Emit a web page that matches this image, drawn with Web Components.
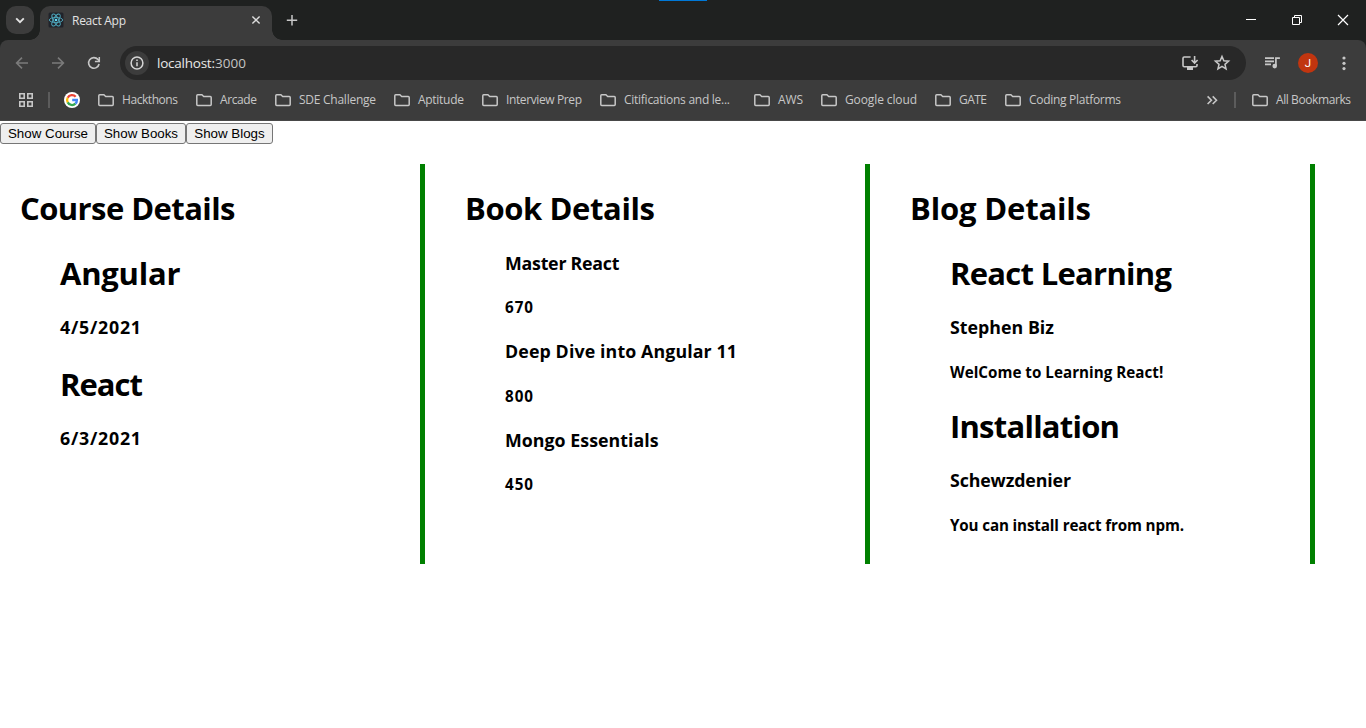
<!DOCTYPE html>
<html lang="en">
<head>
<meta charset="utf-8">
<title>React App</title>
<style>
html,body{margin:0;height:100%;background:#fff;overflow:hidden}
body{font-family:"Open Sans","Noto Sans",sans-serif;color:#000}
</style>
</head>
<body>
<browser-window></browser-window>
<script>
const define = (name, html, after) => customElements.define(name, class extends HTMLElement {
  connectedCallback() {
    if (this.shadowRoot) return;
    this.attachShadow({mode:'open'}).innerHTML = typeof html === 'function' ? html(this) : html;
    if (after) after(this);
  }
});

/* Single line of text whose tracking is tuned to fill the width in "w". */
define('fit-text', `<style>
:host{display:inline-block;white-space:nowrap}
span{display:inline-block}
</style><span><slot></slot></span>`, el => {
  const w = parseFloat(el.getAttribute('w'));
  const s = el.shadowRoot.querySelector('span');
  const n = el.textContent.length;
  el.style.width = w + 'px';
  s.style.letterSpacing = ((w - s.getBoundingClientRect().width) / (n - 1)).toFixed(4) + 'px';
});

const ICONS = {
  chevron:[16,'<path d="M4.2 6.3 8 10.1l3.8-3.8" fill="none" stroke="#e3e3e3" stroke-width="1.9"/>'],
  react:[16,'<rect x=".5" y=".5" width="15" height="15" rx="1.5" fill="#20232a"/><g fill="none" stroke="#4fa9be" stroke-width=".9"><ellipse cx="8" cy="8" rx="6.7" ry="2.6"/><ellipse cx="8" cy="8" rx="6.7" ry="2.6" transform="rotate(60 8 8)"/><ellipse cx="8" cy="8" rx="6.7" ry="2.6" transform="rotate(120 8 8)"/></g><circle cx="8" cy="8" r="1.3" fill="#61dafb"/>'],
  close:[16,'<path d="m4.4 4.4 7.2 7.2m0-7.2-7.2 7.2" stroke="#dcdcdc" stroke-width="1.4"/>'],
  plus:[16,'<path d="M8 3v10.4M2.8 8.2h10.4" stroke="#c7c7c7" stroke-width="1.5"/>'],
  min:[16,'<path d="M3 7.5h10" stroke="#fff"/>'],
  restore:[16,'<path d="M3.5 5.5h7v7h-7zM5.5 5.5v-2h7v7h-2" fill="none" stroke="#fff"/>'],
  winclose:[16,'<path d="m3 3 10 10M13 3 3 13" stroke="#fff" stroke-width="1.2"/>'],
  back:[16,'<path d="M14 8H3M8 2.6 2.6 8 8 13.4" fill="none" stroke="#7b7b7b" stroke-width="1.6"/>'],
  forward:[16,'<path d="M2 8h11M8 2.6 13.4 8 8 13.4" fill="none" stroke="#7b7b7b" stroke-width="1.6"/>'],
  reload:[16,'<path d="M13.1 9A5.3 5.3 0 1 1 11.9 4.4L13.2 5.8" fill="none" stroke="#c7c7c7" stroke-width="1.6"/><path d="M13.3 2v4.4H8.9" fill="none" stroke="#c7c7c7" stroke-width="1.5"/>'],
  info:[16,'<circle cx="8" cy="8" r="5.9" fill="none" stroke="#d6d6d6" stroke-width="1.5"/><path d="M8 7.2v4M8 4.5v1.6" stroke="#d6d6d6" stroke-width="1.5"/>'],
  install:[18,'<path d="M9.6 3H3.2a1.2 1.2 0 0 0-1.2 1.2v7.3a1.2 1.2 0 0 0 1.2 1.2h11.6a1.2 1.2 0 0 0 1.2-1.2v-1.6" fill="none" stroke="#c7c7c7" stroke-width="1.6"/><path d="M6 12.5h6V16H6z" fill="#c7c7c7"/><path d="M13.6 2v6.7M10.6 6l3 3 3-3" fill="none" stroke="#c7c7c7" stroke-width="1.6"/>'],
  star:[18,'<path d="m9 2.5 1.85 4.3 4.65.42-3.52 3.08 1.05 4.6L9 12.45 4.97 14.9l1.05-4.6L2.5 7.22l4.65-.42z" fill="none" stroke="#c7c7c7" stroke-width="1.55"/>'],
  music:[18,'<path d="M2 4.2h9M2 7.3h9M2 10.4h6M12.9 12V4.2h4" fill="none" stroke="#c7c7c7" stroke-width="1.7"/><circle cx="11.7" cy="12.1" r="2.3" fill="#c7c7c7"/>'],
  dots:[16,'<g fill="#c7c7c7"><circle cx="8" cy="3" r="1.6"/><circle cx="8" cy="8.3" r="1.6"/><circle cx="8" cy="13.6" r="1.6"/></g>'],
  grid:[16,'<path d="M1.8 1.8h4.4v4.4H1.8zM9.8 1.8h4.4v4.4H9.8zM1.8 9.8h4.4v4.4H1.8zM9.8 9.8h4.4v4.4H9.8z" fill="none" stroke="#c7c7c7" stroke-width="1.6"/>'],
  folder:[16,'<path d="M.8 3.7c0-.5.4-.9.9-.9h4.2l1.8 1.7h6.6c.5 0 .9.4.9.9v7.1c0 .5-.4.9-.9.9H1.7c-.5 0-.9-.4-.9-.9z" fill="none" stroke="#c7c7c7" stroke-width="1.5"/>'],
  google:[16,'<circle cx="8" cy="8" r="8" fill="#fff"/><g fill="none" stroke-width="2.3"><path d="M11.7 4.8A4.9 4.9 0 0 0 3.7 5.7" stroke="#ea4335"/><path d="M3.7 5.7a4.9 4.9 0 0 0 0 4.8" stroke="#fbbc05"/><path d="M3.7 10.4a4.9 4.9 0 0 0 7.7 1.3" stroke="#34a853"/><path d="M11.4 11.7A4.7 4.7 0 0 0 12.9 8H8.2" stroke="#4285f4"/></g>'],
  more:[16,'<path d="m3.6 4.4 3.8 3.8L3.6 12M8.7 4.4l3.8 3.8L8.7 12" fill="none" stroke="#c7c7c7" stroke-width="1.6"/>']
};
define('ui-icon', el => {
  const [n, art] = ICONS[el.getAttribute('name')];
  return `<style>:host{display:block;flex:none;width:${n}px;height:${n}px}svg{display:block}</style><svg width="${n}" height="${n}" viewBox="0 0 ${n} ${n}">${art}</svg>`;
});

define('tab-strip', `<style>
:host{display:flex;height:40px;background:#1f2120;position:relative}
.search{box-sizing:border-box;width:28px;height:28px;margin:6px 6px 0;border-radius:10px;background:#3c3c3c;padding:6px}
.tab{position:relative;display:flex;align-items:center;box-sizing:border-box;width:232px;height:34px;margin-top:6px;padding:0 8px 6px;background:#3c3c3c;border-radius:10px 10px 0 0;color:#e3e3e3;font-size:12px}
.tab::before,.tab::after{content:"";position:absolute;bottom:0;width:10px;height:10px}
.tab::before{left:-10px;background:radial-gradient(circle at 0 0,transparent 9.5px,#3c3c3c 10px)}
.tab::after{right:-10px;background:radial-gradient(circle at 100% 0,transparent 9.5px,#3c3c3c 10px)}
fit-text{margin:2px 0 0 8px;line-height:16px}
.x{margin-left:auto}
.plus{margin:12px 0 0 12px}
.win{display:flex;gap:30px;margin:12px 15px 0 auto}
.mark{position:absolute;left:659px;top:0;width:48px;height:1px;background:#0078d7}
</style>
<div class="search"><ui-icon name="chevron"></ui-icon></div>
<div class="tab"><ui-icon name="react"></ui-icon><fit-text w="54">React App</fit-text><ui-icon class="x" name="close"></ui-icon></div>
<ui-icon class="plus" name="plus"></ui-icon>
<div class="win"><ui-icon name="min"></ui-icon><ui-icon name="restore"></ui-icon><ui-icon name="winclose"></ui-icon></div>
<div class="mark"></div>`);

define('tool-bar', `<style>
:host{display:flex;align-items:center;height:46px;box-sizing:border-box}
.nav{display:flex;gap:20px;margin-left:14px}
.url{display:flex;align-items:center;box-sizing:border-box;width:1126px;height:34px;margin-left:18px;padding:0 15px 0 5px;border-radius:17px;background:#282828;color:#e8e8e8;font-size:13.5px}
.info{padding:4px;border-radius:50%;background:#3c3c3c;margin-right:8px}
.port{color:#c4c4c4}
.acts{display:flex;gap:14px;margin-left:auto}
.music{margin-left:17px}
.user{width:20px;height:20px;margin:0 18px 0 17px;border-radius:50%;background:#c1350f;color:#fff;font:11.5px/20px Roboto,sans-serif;text-align:center}
</style>
<div class="nav"><ui-icon name="back"></ui-icon><ui-icon name="forward"></ui-icon><ui-icon name="reload"></ui-icon></div>
<div class="url"><div class="info"><ui-icon name="info"></ui-icon></div><fit-text w="58">localhost:</fit-text><fit-text class="port" w="31">3000</fit-text>
<div class="acts"><ui-icon name="install"></ui-icon><ui-icon name="star"></ui-icon></div></div>
<ui-icon class="music" name="music"></ui-icon><div class="user">J</div><ui-icon name="dots"></ui-icon>`);

define('bookmark-item', el => `<style>
:host{display:flex;align-items:center;gap:8px;font-size:12px;line-height:16px;color:#c7c7c7}
</style><ui-icon name="folder"></ui-icon><fit-text w="${el.getAttribute('w')}">${el.textContent}</fit-text>`);

define('bookmark-bar', `<style>
:host{display:flex;align-items:center;height:35px;box-sizing:border-box;padding:0 15px 7px 18px;border-bottom:1px solid #484848}
.sep{width:2px;height:16px;background:#5c5c5c;margin:0 14px}
.list{display:flex;gap:18px;margin-left:18px}
.wide{margin-right:6px}
.more{margin-left:auto}
.sep.end{margin:0 16px 0 14px}
</style>
<ui-icon name="grid"></ui-icon><div class="sep"></div><ui-icon name="google"></ui-icon>
<div class="list">
<bookmark-item w="56">Hackthons</bookmark-item><bookmark-item w="37">Arcade</bookmark-item><bookmark-item w="77">SDE Challenge</bookmark-item><bookmark-item w="46">Aptitude</bookmark-item><bookmark-item w="76">Interview Prep</bookmark-item><bookmark-item class="wide" w="106">Citifications and le...</bookmark-item><bookmark-item w="25">AWS</bookmark-item><bookmark-item w="72">Google cloud</bookmark-item><bookmark-item w="28">GATE</bookmark-item><bookmark-item w="92">Coding Platforms</bookmark-item>
</div>
<ui-icon class="more" name="more"></ui-icon><div class="sep end"></div><bookmark-item w="75">All Bookmarks</bookmark-item>`);

define('push-button', `<style>
:host{display:block}
button{display:block;box-sizing:border-box;width:100%;height:21px;margin:0;padding:0;border:1px solid #767676;border-radius:3px;background:#efefef;color:#000;font:13.333px/19px "Liberation Sans",Arial,sans-serif;text-align:center;white-space:nowrap}
</style><button><slot></slot></button>`);

define('detail-column', `<style>
:host{display:flow-root;width:400px;height:400px;margin:0 20px;border-right:5px solid green;flex:none}
h1{margin:22px 0 21.8px;height:43px;font-size:31px;line-height:44px}
ul{margin:0;padding-left:40px}
</style><h1><slot name="title"></slot></h1><ul><slot></slot></ul>`);

define('detail-line', el => {
  const [tag, size, box, lh, m] = {1:['h1',31,43,44.6,21.44],3:['h3',17.8,25,25,18.72],4:['h4',15.2,21,21,21.28]}[el.getAttribute('level')];
  return `<style>:host{display:block}${tag}{margin:${m}px 0;height:${box}px;font-size:${size}px;line-height:${lh}px;font-weight:700}</style><${tag}><fit-text w="${el.getAttribute('w')}">${el.textContent}</fit-text></${tag}>`;
});

define('course-page', `<style>
:host{display:block;padding-top:2px}
.buttons{display:flex;height:41px}
.columns{display:flex}
</style>
<div class="buttons"><push-button style="width:96px">Show Course</push-button><push-button style="width:90px">Show Books</push-button><push-button style="width:87px">Show Blogs</push-button></div>
<div class="columns">
<detail-column><fit-text slot="title" w="215.5">Course Details</fit-text>
<detail-line level="1" w="120.5">Angular</detail-line><detail-line level="3" w="81">4/5/2021</detail-line>
<detail-line level="1" w="83">React</detail-line><detail-line level="3" w="81">6/3/2021</detail-line></detail-column>
<detail-column><fit-text slot="title" w="190">Book Details</fit-text>
<detail-line level="3" w="114.5">Master React</detail-line><detail-line level="4" w="28">670</detail-line>
<detail-line level="3" w="232">Deep Dive into Angular 11</detail-line><detail-line level="4" w="28">800</detail-line>
<detail-line level="3" w="153.5">Mongo Essentials</detail-line><detail-line level="4" w="28">450</detail-line></detail-column>
<detail-column><fit-text slot="title" w="181">Blog Details</fit-text>
<detail-line level="1" w="222">React Learning</detail-line><detail-line level="3" w="104">Stephen Biz</detail-line><detail-line level="4" w="213.3">WelCome to Learning React!</detail-line>
<detail-line level="1" w="170">Installation</detail-line><detail-line level="3" w="121">Schewzdenier</detail-line><detail-line level="4" w="234">You can install react from npm.</detail-line></detail-column>
</div>`);

define('browser-window', `<style>
:host{display:block;width:1366px;height:728px;background:#fff;overflow:hidden}
.frame{background:#1f2120}
.bars{background:#3c3c3c;border-radius:8px 8px 0 0}
</style>
<div class="frame"><tab-strip></tab-strip><div class="bars"><tool-bar></tool-bar><bookmark-bar></bookmark-bar></div></div>
<course-page></course-page>`);
</script>
</body>
</html>
